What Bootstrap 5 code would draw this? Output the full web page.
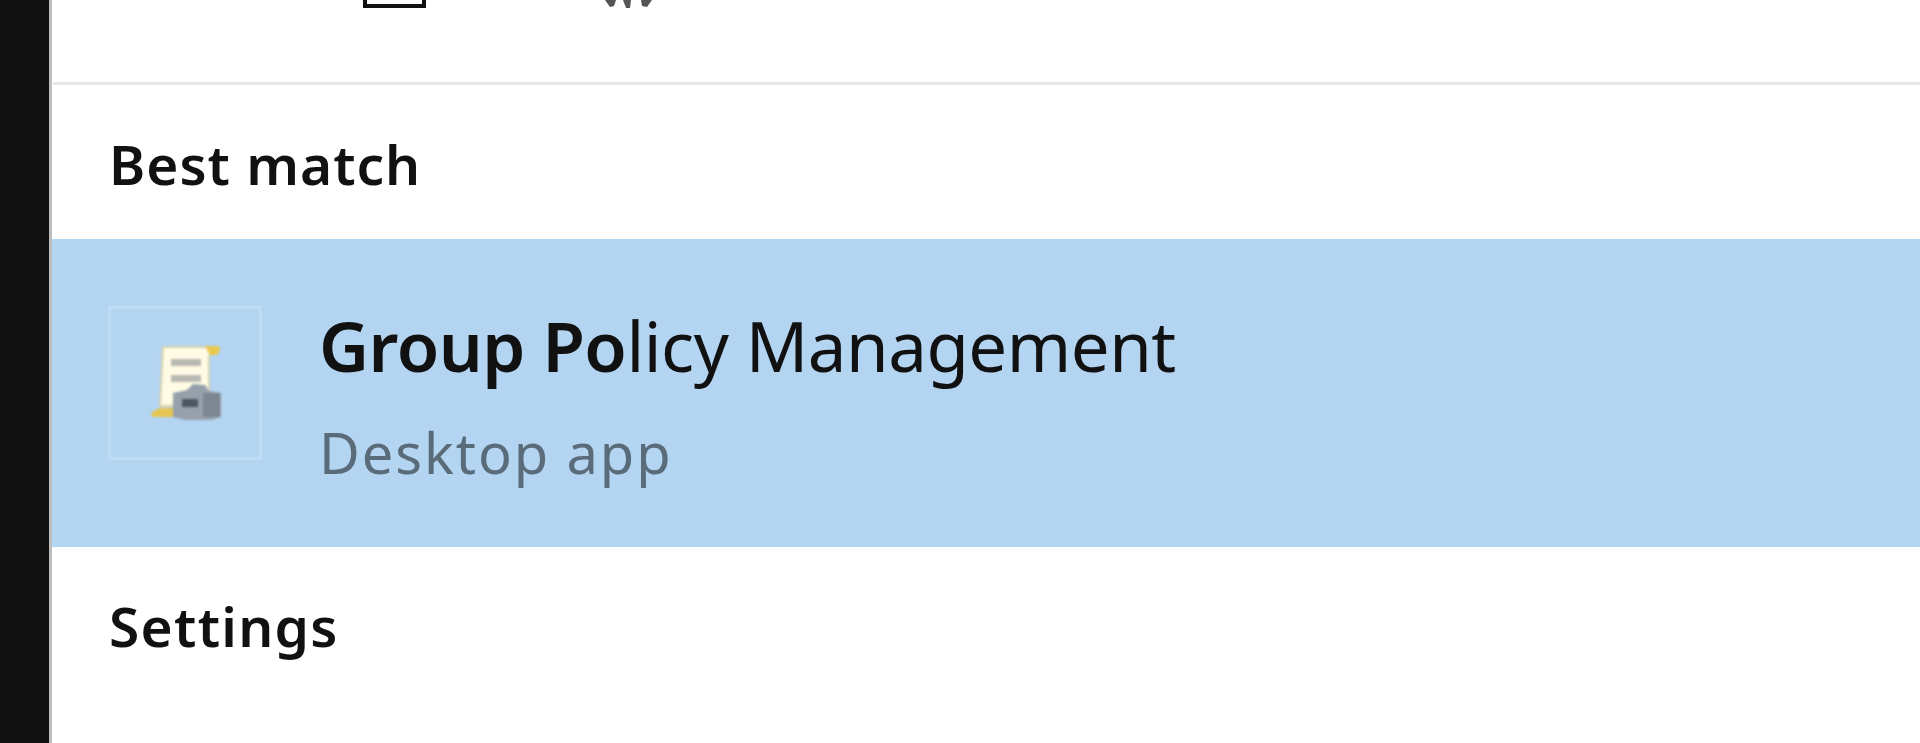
<!DOCTYPE html>
<html lang="en">
<head>
    <meta charset="UTF-8">
    <meta name="viewport" content="width=device-width, initial-scale=1.0">
    <title>Group Policy Management</title>
    <link href="https://cdn.jsdelivr.net/npm/bootstrap@5.3.0/dist/css/bootstrap.min.css" rel="stylesheet">
    <style>
        html, body { height: 100%; overflow: hidden; background: #fff; }
        body { font-family: "Noto Sans", "Open Sans", sans-serif; color: #111; }
        .side-strip { width: 52px; background: #111; border-right: 3px solid #bdbdbd; }
        .top-strip { height: 82px; overflow: hidden; padding-left: 311px; gap: 177px; }
        .tab-icon { width: 63px; height: 8px; border: 4px solid #111; border-top: 0; }
        .gear-stub { width: 52px; height: 8px; }
        .split-line { height: 3px; background: #e6e6e6; margin-left: 1px; }
        .group-title { font-size: 55px; line-height: 60px; font-weight: 600; padding-left: 57px; filter: blur(.6px); }
        .best-head { padding-top: 49px; height: 154px; letter-spacing: 1px; }
        .hit-row { height: 308px; background: #b3d5f2; padding-left: 56px; padding-top: 67px; gap: 57px; }
        .icon-box { width: 154px; height: 154px; border: 3px solid #c0dcf5; }
        .icon-box svg { filter: blur(1.2px); }
        .app-text { filter: blur(.6px); }
        .app-name { font-size: 69px; line-height: 80px; margin-top: -1px; letter-spacing: -0.5px; }
        .app-name b { font-weight: 600; }
        .app-kind { font-size: 56px; line-height: 70px; margin-top: 32px; color: #5a6b7a; letter-spacing: 1.9px; }
        .settings-head { padding-top: 49px; letter-spacing: 1.3px; }
    </style>
</head>
<body>
    <div class="d-flex h-100">
        <div class="side-strip flex-shrink-0"></div>
        <div class="flex-grow-1">
            <div class="top-strip d-flex">
                <div class="tab-icon"></div>
                <svg class="gear-stub" viewBox="0 0 52 8">
                    <path d="M2 0l5 7 4-1 2-6zM20 0l3 8 4 0 1-8zM38 0l1 6 5 1 5-7z" fill="#555"/>
                </svg>
            </div>
            <div class="split-line"></div>
            <div class="group-title best-head">Best match</div>
            <div class="hit-row d-flex">
                <div class="icon-box d-flex align-items-center justify-content-center flex-shrink-0">
                    <svg width="76" height="80" viewBox="0 0 76 80">
                        <path d="M16 4h52l-6 9v50H13z" fill="#fffbe4" stroke="#d8d2b0" stroke-width="2"/>
                        <path d="M58 3h12c4 0 4 4 0 9h-7z" fill="#e9c84e"/>
                        <path d="M5 70c3-4 8-5 12-5h26v9H8c-3 0-5-2-3-4z" fill="#e6c650"/>
                        <rect x="24" y="16" width="30" height="7" fill="#b9b9b4"/>
                        <rect x="24" y="32" width="30" height="7" fill="#b9b9b4"/>
                        <path d="M26 50l14-3 6-6 12 1 4 6 12 2v24l-10 3H38l-12-3z" fill="#95a0aa"/>
                        <rect x="35" y="56" width="16" height="8" fill="#4a5661"/>
                        <rect x="56" y="50" width="17" height="24" fill="#7c8792"/>
                    </svg>
                </div>
                <div class="app-text">
                    <div class="app-name"><b>Group Po</b>licy Management</div>
                    <div class="app-kind">Desktop app</div>
                </div>
            </div>
            <div class="group-title settings-head">Settings</div>
        </div>
    </div>
</body>
</html>
